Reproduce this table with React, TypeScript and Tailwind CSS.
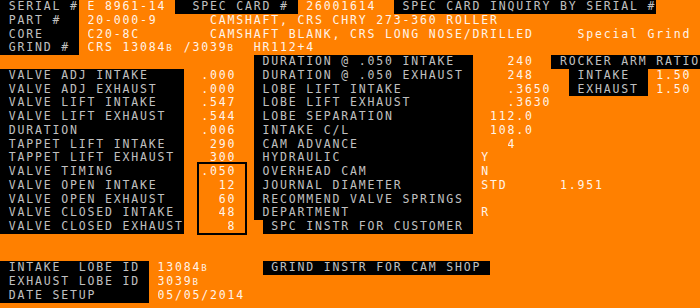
import React from 'react';

// one terminal cell = 8.75 x 13.75 px (80 columns across 700px)
const CW = 8.75;

type Seg = [number, string, boolean?];

const blk = (c: number, t: string, w: number): Seg => [c, t.padEnd(w), true];

const rows: Seg[][] = [
  [blk(0, ' SERIAL #', 9), [10, 'E 8961-14'], blk(20, '  SPEC CARD #', 14), [35, '26001614'], blk(45, ' SPEC CARD INQUIRY BY SERIAL #', 30)],
  [blk(0, ' PART #', 9), [10, '20-000-9'], [24, 'CAMSHAFT, CRS CHRY 273-360 ROLLER']],
  [blk(0, ' CORE', 9), [10, 'C20-8C'], [24, 'CAMSHAFT BLANK, CRS LONG NOSE/DRILLED'], [66, 'Special Grind']],
  [blk(0, ' GRIND #', 9), [10, 'CRS 13084B /3039B  HR112+4']],
  [blk(29, ' DURATION @ .050 INTAKE', 25), [58, '240'], blk(63, ' ROCKER ARM RATIO', 17)],
  [blk(0, ' VALVE ADJ INTAKE', 21), [23, '.000'], blk(29, ' DURATION @ .050 EXHAUST', 25), [58, '248'], blk(65, ' INTAKE', 9), [75, '1.50']],
  [blk(0, ' VALVE ADJ EXHAUST', 21), [23, '.000'], blk(29, ' LOBE LIFT INTAKE', 25), [58, '.3650'], blk(65, ' EXHAUST', 9), [75, '1.50']],
  [blk(0, ' VALVE LIFT INTAKE', 21), [23, '.547'], blk(29, ' LOBE LIFT EXHAUST', 25), [58, '.3630']],
  [blk(0, ' VALVE LIFT EXHAUST', 21), [23, '.544'], blk(29, ' LOBE SEPARATION', 25), [56, '112.0']],
  [blk(0, ' DURATION', 21), [23, '.006'], blk(29, ' INTAKE C/L', 25), [56, '108.0']],
  [blk(0, ' TAPPET LIFT INTAKE', 21), [24, '290'], blk(29, ' CAM ADVANCE', 25), [58, '4']],
  [blk(0, ' TAPPET LIFT EXHAUST', 21), [24, '300'], blk(29, ' HYDRAULIC', 25), [55, 'Y']],
  [blk(0, ' VALVE TIMING', 21), [23, '.050'], blk(29, ' OVERHEAD CAM', 25), [55, 'N']],
  [blk(0, ' VALVE OPEN INTAKE', 21), [25, '12'], blk(29, ' JOURNAL DIAMETER', 25), [55, 'STD'], [64, '1.951']],
  [blk(0, ' VALVE OPEN EXHAUST', 21), [25, '60'], blk(29, ' RECOMMEND VALVE SPRINGS', 25)],
  [blk(0, ' VALVE CLOSED INTAKE', 21), [25, '48'], blk(29, ' DEPARTMENT', 25), [55, 'R']],
  [blk(0, ' VALVE CLOSED EXHAUST', 21), [26, '8'], blk(30, ' SPC INSTR FOR CUSTOMER', 24)],
  [],
  [],
  [blk(0, ' INTAKE  LOBE ID', 17), [18, '13084B'], blk(30, ' GRIND INSTR FOR CAM SHOP', 26)],
  [blk(0, ' EXHAUST LOBE ID', 17), [18, '3039B']],
  [blk(0, ' DATE SETUP', 17), [18, '05/05/2014']],
];

// lobe ids print their trailing B as a small capital
const renderText = (t: string) => {
  const parts = t.split(/(?<=\d)B/);
  return parts.map((p, i) => (
    <React.Fragment key={i}>
      {p}
      {i < parts.length - 1 && (
        <span className="inline-block w-[8.75px] text-[9px] tracking-normal">B</span>
      )}
    </React.Fragment>
  ));
};

const Row = ({ segs }: { segs: Seg[] }) => {
  let col = 0;
  const out: React.ReactNode[] = [];
  segs.forEach(([c, t, b], i) => {
    if (c > col) {
      out.push(<span key={'g' + i} className="shrink-0" style={{ width: (c - col) * CW }} />);
    }
    out.push(
      <span
        key={i}
        className={`shrink-0 overflow-hidden ${b ? 'bg-black text-[#c0c0c0]' : 'text-[#fff4ea]'}`}
        style={{ width: t.length * CW }}
      >
        {renderText(t)}
      </span>
    );
    col = c + t.length;
  });
  return <div className="flex h-[13.75px] leading-[13.75px] whitespace-pre">{out}</div>;
};

const App = () => {
  return (
    <div
      className="relative w-[700px] h-[308px] overflow-hidden bg-[#ff8000] text-[11.5px] tracking-[1.826px]"
      style={{ fontFamily: '"DejaVu Sans Mono", monospace' }}
    >
      {rows.map((segs, i) => (
        <Row key={i} segs={segs} />
      ))}
      {/* outline round the valve timing figures */}
      <div className="absolute left-[197px] top-[162px] w-[50px] h-[73px] border-2 border-black" />
    </div>
  );
};

export default App;
